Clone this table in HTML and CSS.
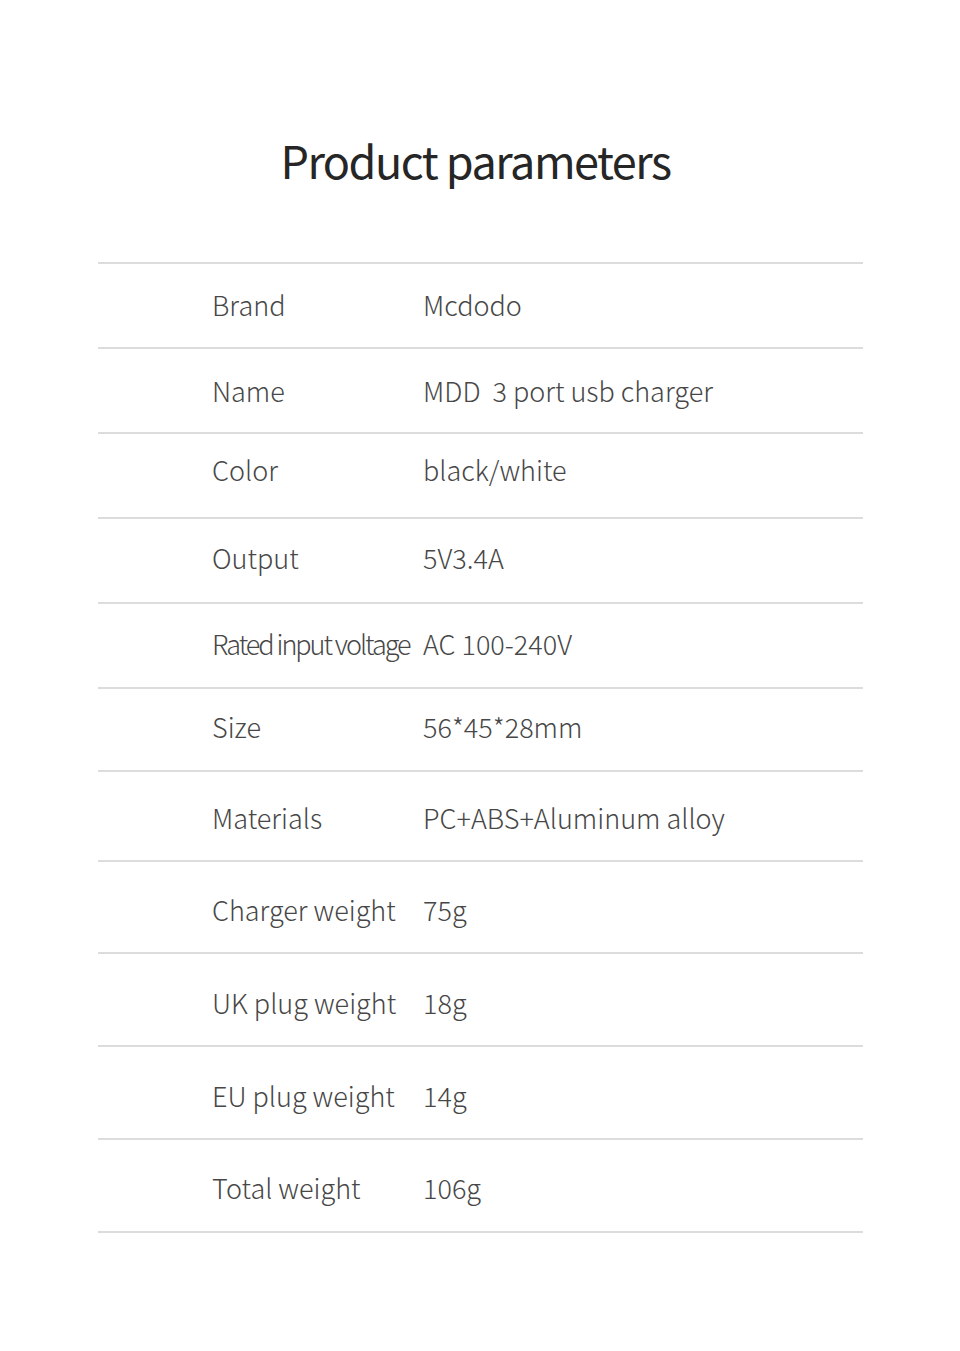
FILE: index.html
```html
<!DOCTYPE html>
<html lang="en">
<head>
<meta charset="utf-8">
<title>Product parameters</title>
<link rel="stylesheet" href="styles.css">
</head>
<body>
<main class="page">
  <h1 class="title">Product parameters</h1>
  <div class="params">
    <div class="row"><span class="label">Brand</span><span class="value">Mcdodo</span></div>
    <div class="row"><span class="label">Name</span><span class="value">MDD&nbsp; 3 port usb charger</span></div>
    <div class="row"><span class="label">Color</span><span class="value">black/white</span></div>
    <div class="row"><span class="label">Output</span><span class="value">5V3.4A</span></div>
    <div class="row"><span class="label label-tight">Rated input voltage</span><span class="value">AC 100-240V</span></div>
    <div class="row"><span class="label">Size</span><span class="value">56*45*28mm</span></div>
    <div class="row"><span class="label">Materials</span><span class="value">PC+ABS+Aluminum alloy</span></div>
    <div class="row"><span class="label">Charger weight</span><span class="value">75g</span></div>
    <div class="row"><span class="label">UK plug weight</span><span class="value">18g</span></div>
    <div class="row"><span class="label">EU plug weight</span><span class="value">14g</span></div>
    <div class="row"><span class="label">Total weight</span><span class="value">106g</span></div>
  </div>
</main>
</body>
</html>
```
FILE: styles.css
```css
html, body {
  margin: 0;
  padding: 0;
  background: #ffffff;
}
body {
  font-family: "Noto Sans CJK SC", "Noto Sans", sans-serif;
  color: #474747;
}
.page {
  width: 960px;
  height: 1351px;
  padding-top: 128px;
  box-sizing: border-box;
}
.title {
  margin: 0;
  height: 134px;
  box-sizing: border-box;
  padding-right: 9px;
  text-align: center;
  font-size: 45px;
  font-weight: 400;
  line-height: 64px;
  letter-spacing: -1.5px;
  color: #262626;
}
.params {
  margin: 0 97px 0 98px;
  border-top: 2px solid #dcdcdc;
}
.row {
  display: flex;
  align-items: center;
  box-sizing: border-box;
  height: 85px;
  border-bottom: 2px solid #dcdcdc;
  padding-left: 114px;
  font-size: 27px;
  font-weight: 300;
  line-height: 36px;
}
.row:nth-child(1) { padding-bottom: 2px; }
.row:nth-child(3) { padding-bottom: 12px; }
.row:nth-child(4) { padding-bottom: 6px; }
.row:nth-child(5) { padding-bottom: 4px; }
.row:nth-child(6) { height: 83px; padding-bottom: 6px; }
.row:nth-child(7) { height: 90px; padding-top: 4px; }
.row:nth-child(8) { height: 92px; padding-top: 6px; }
.row:nth-child(9),
.row:nth-child(10) { height: 93px; padding-top: 6px; }
.row:nth-child(11) { height: 93px; padding-top: 4px; }
.label {
  width: 211px;
  flex: none;
  white-space: nowrap;
}
.label-tight {
  letter-spacing: -2.05px;
}
.value {
  white-space: nowrap;
}
```
